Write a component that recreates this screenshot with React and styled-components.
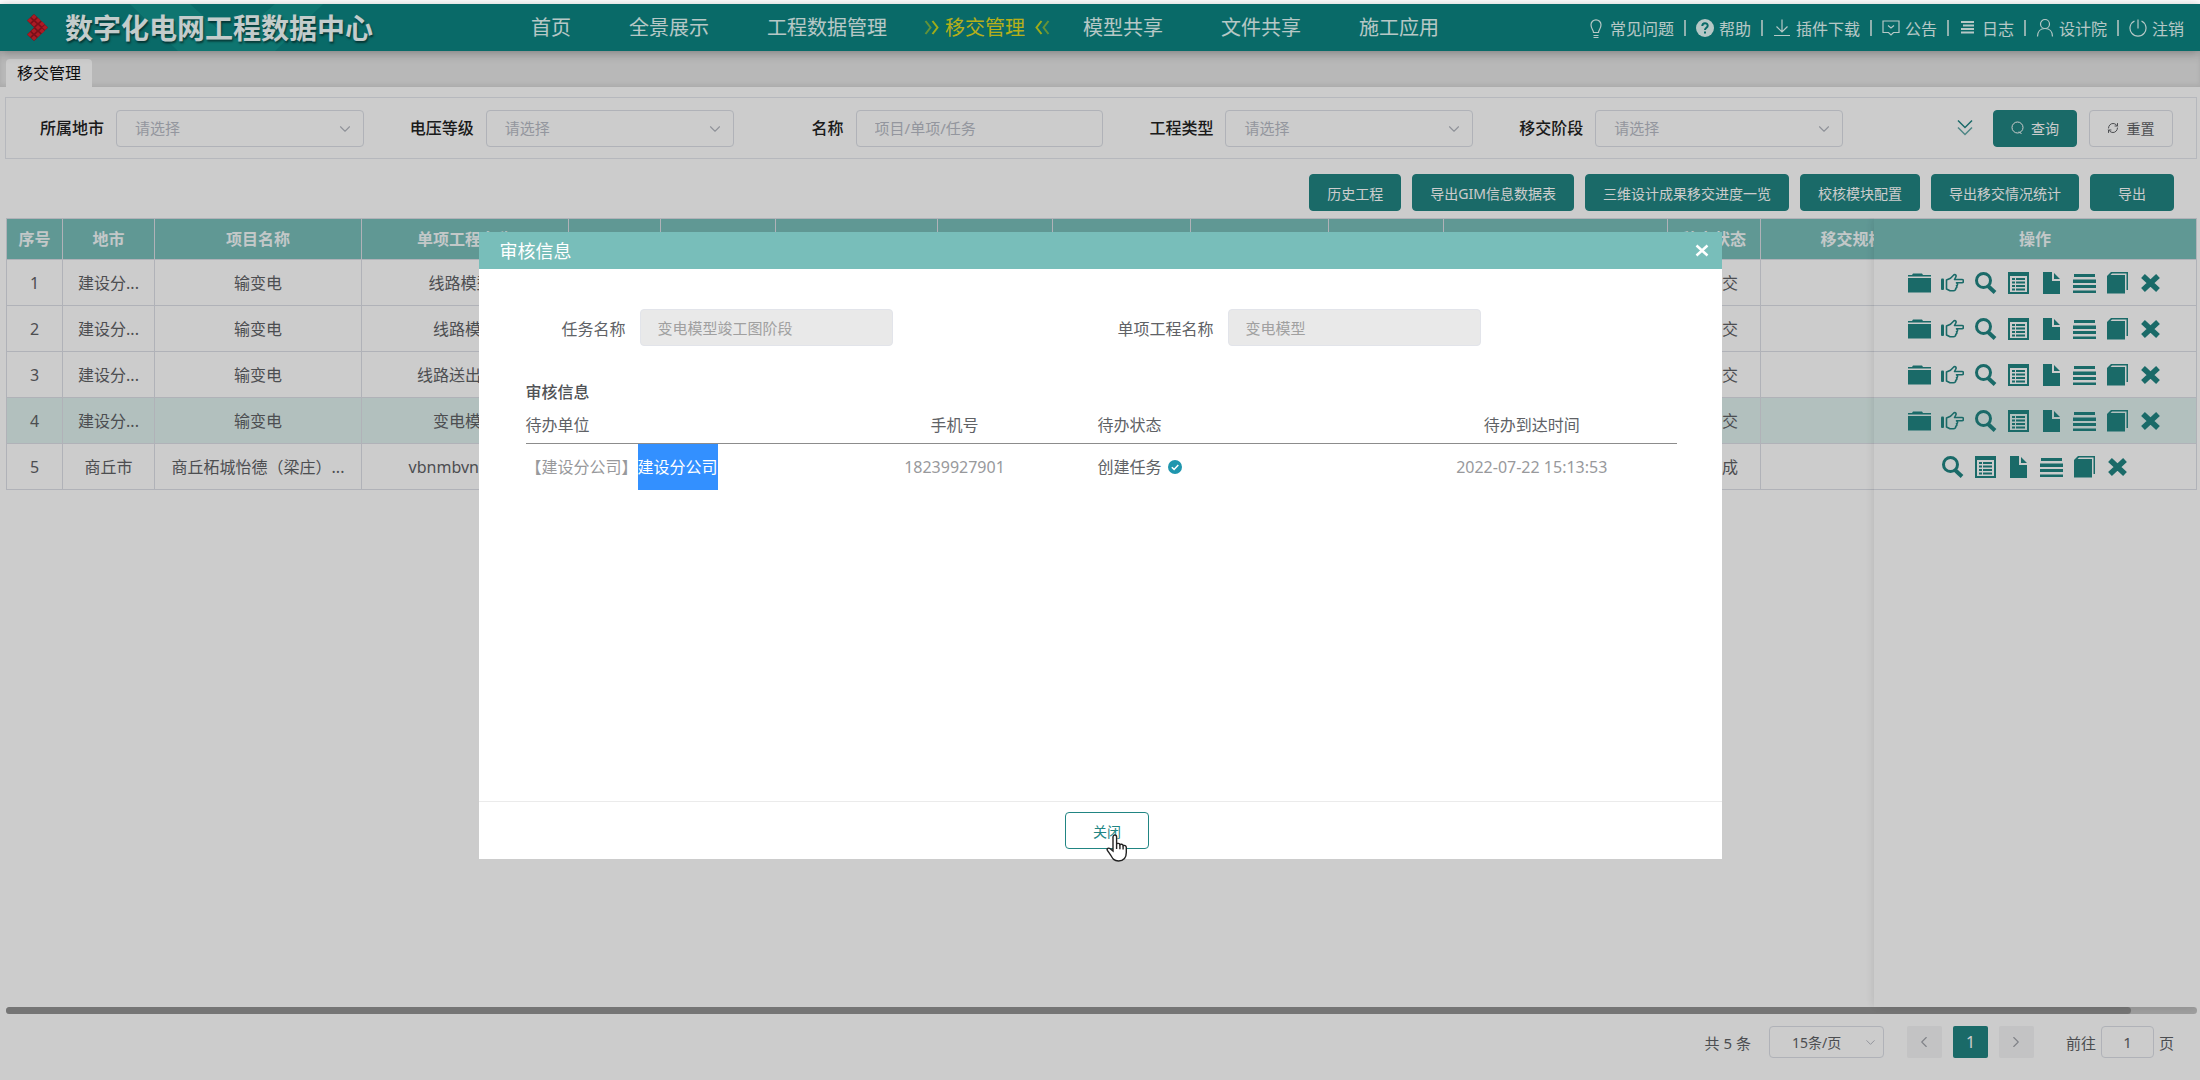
import styled, { createGlobalStyle } from "styled-components";
import { ChevronDown, ChevronLeft, ChevronRight, RefreshCw } from "lucide-react";

const navLinks = [
  { text: "首页" },
  { text: "全景展示" },
  { text: "工程数据管理" },
  { text: "移交管理", active: true },
  { text: "模型共享" },
  { text: "文件共享" },
  { text: "施工应用" },
];

const tools = [
  { text: "常见问题", icon: "bulb" },
  { text: "帮助", icon: "help" },
  { text: "插件下载", icon: "download" },
  { text: "公告", icon: "notice" },
  { text: "日志", icon: "log" },
  { text: "设计院", icon: "user" },
  { text: "注销", icon: "power" },
];

const filters = [
  { id: "city", label: "所属地市" },
  { id: "voltage", label: "电压等级" },
  { id: "name", label: "名称", placeholder: "项目/单项/任务" },
  { id: "type", label: "工程类型" },
  { id: "stage", label: "移交阶段" },
];

const exportsList = [
  "历史工程",
  "导出GIM信息数据表",
  "三维设计成果移交进度一览",
  "校核模块配置",
  "导出移交情况统计",
  "导出",
];

const columns = [
  { width: 57, title: "序号" },
  { width: 92, title: "地市" },
  { width: 207, title: "项目名称" },
  { width: 207, title: "单项工程名称" },
  { width: 92 },
  { width: 115 },
  { width: 162 },
  { width: 115 },
  { width: 138 },
  { width: 138 },
  { width: 115 },
  { width: 224 },
  { width: 93, title: "移交状态" },
  { width: 184, title: "移交规模" },
  { width: 323, title: "操作", fixed: true },
];

const rows = [
  { city: "建设分...", project: "输变电", name: "线路模型1", status: "未提交" },
  { city: "建设分...", project: "输变电", name: "线路模型", status: "未提交" },
  { city: "建设分...", project: "输变电", name: "线路送出工程", status: "未提交" },
  {
    city: "建设分...",
    project: "输变电",
    name: "变电模型",
    status: "未提交",
    current: true,
  },
  {
    city: "商丘市",
    project: "商丘柘城怡德（梁庄）...",
    name: "vbnmbvnmbvn",
    status: "已完成",
    done: true,
  },
];

const allActions = [
  "folder",
  "hand",
  "search",
  "list",
  "file",
  "lines",
  "book",
  "remove",
];

const toolIcons = {
  bulb: (
    <>
      <path d="M6.5 14.5C6.5 11.8 4 10.8 4 6.8a5 5 0 0 1 10 0c0 4-2.5 5-2.5 7.7z" />
      <path d="M6.5 17.5h5M6.5 19.5h5" />
    </>
  ),
  help: (
    <>
      <circle cx="9" cy="10" r="9" fill="currentColor" stroke="none" />
      <path
        d="M6.3 8c0-3.7 5.4-3.6 5.4-.3 0 2-2.7 2.1-2.7 4.3M9 13.6v2"
        stroke="#0c8582"
        strokeWidth="2"
      />
    </>
  ),
  download: <path d="M9 1.500v12M3.500 8.500L9 14l5.500-5.500M1 17.500h16" />,
  notice: (
    <>
      <path d="M1 3h16v11.500h-5.500L9 17l-2.500-2.500H1z" />
      <path d="M6 7.500l3 2.500 3-2.500" />
    </>
  ),
  log: (
    <path
      d="M2 4h13M4 7.500h11M2 11h13M2 14.500h13"
      strokeWidth="2.200"
    />
  ),
  user: (
    <>
      <circle cx="9" cy="6" r="4.500" />
      <path d="M1.500 18.500c0-5 3-8 7.500-8s7.500 3 7.500 8" />
    </>
  ),
  power: <path d="M5.500 3a8 8 0 1 0 7 0M9 1.500v9" />,
};

const actionIcons = {
  folder: (
    <path d="M0 4.500V3h4l1-1.500h9L15 3h8v1.500zM0 6h23v14.500H0z" />
  ),
  hand: (
    <>
      <rect x="0" y="6.500" width="3" height="11.500" rx="1" />
      <path
        d="M5.500 8l4-1.800L13 2.800c1.500-.8 2.600.8 1.800 2.200L13.500 7.500H21c2 0 2 3.200 0 3.200h-5.500c1.500.8 1.300 2.600 0 3 .8 1 .3 2.400-.8 2.600.3 1.500-.7 2.400-2.200 2.400H9L5.500 17z"
        fill="none"
        stroke="currentColor"
        strokeWidth="1.600"
        strokeLinejoin="round"
      />
    </>
  ),
  search: (
    <>
      <circle
        cx="9.500"
        cy="8.500"
        r="7"
        fill="none"
        stroke="currentColor"
        strokeWidth="3"
      />
      <path d="M14 14l7 6.500" stroke="currentColor" strokeWidth="4" />
    </>
  ),
  list: (
    <path
      fillRule="evenodd"
      d="M1 0h21v22H1zM3 4v16h17V4zM5 6h3v2H5zM9 6h9v2H9zM5 9.500h3v2H5zM9 9.500h9v2H9zM5 13h3v2H5zM9 13h9v2H9zM5 16.500h3v2H5zM9 16.500h9v2H9z"
    />
  ),
  file: <path d="M3 0h9v9h8v13H3zM14 1l6 6h-6z" />,
  lines: (
    <path d="M1 2h21v3H1zM0 7.500h23v3.500H0zM0 13h23v3H0zM0 18.500h23V21H0z" />
  ),
  book: (
    <path d="M5 0h17v18h-1.500V1.500H6L4.500 3H19v18.500H1V4z" />
  ),
  remove: (
    <path
      d="M4 4l15 14M19 4L4 18"
      stroke="currentColor"
      strokeWidth="5.500"
    />
  ),
};

const App = () => {
  return (
    <>
      <GlobalStyle />
      <Page>
        <Header />
        <Tabs>
          <Tab href="#transfer">移交管理</Tab>
        </Tabs>
        <Filters />
        <Toolbar>
          {exportsList.map((text) => {
            return <Button key={text}>{text}</Button>;
          })}
        </Toolbar>
        <ProjectTable />
        <Pagination />
        <Mask>
          <AuditDialog />
        </Mask>
      </Page>
    </>
  );
};

function Header() {
  return (
    <HeaderBar>
      <HeaderArt width="400" height="47" viewBox="0 0 400 47">
        <path d="M130 0h60l52 47h-64z" />
        <path d="M275 0h48l-48 47h-55z" />
      </HeaderArt>
      <Brand>
        <Logo />
        <h1>数字化电网工程数据中心</h1>
      </Brand>
      <Nav>
        {navLinks.map(({ text, active }) => {
          return (
            <NavLink key={text} href="#nav" $active={active}>
              {active && <Arrows />}
              {text}
              {active && <Arrows $right />}
            </NavLink>
          );
        })}
      </Nav>
      <Tools>
        {tools.map(({ text, icon }) => {
          return (
            <ToolLink key={text} href="#tool">
              <svg width="18" height="20" viewBox="0 0 18 20">
                {toolIcons[icon]}
              </svg>
              {text}
            </ToolLink>
          );
        })}
      </Tools>
    </HeaderBar>
  );
}

function Logo() {
  const dots = [
    [8, 4],
    [12, 7.5],
    [16, 11],
    [4, 7.5],
    [8, 11],
    [12, 14.5],
    [19, 14.5],
    [16, 18],
    [12, 21.5],
    [8, 25],
    [8, 18],
    [4, 21.5],
  ];
  return (
    <svg width="23" height="29" viewBox="0 0 23 29">
      <path d="M8 1l14 13.500L8 28l-7-6.500 7-7-7-7z" fill="#961420" />
      {dots.map(([x, y]) => {
        return (
          <path
            key={`${x}-${y}`}
            d={`M${x} ${y - 2.5}l2.700 2.500-2.700 2.500-2.700-2.500z`}
            fill="#d8222e"
          />
        );
      })}
    </svg>
  );
}

function Arrows({ $right }) {
  return (
    <ArrowIcon $right={$right} width="16" height="15" viewBox="0 0 16 15">
      <path d="M1.500 1l5 6.500-5 6.500" opacity="0.6" />
      <path d="M8.500 1l5 6.500-5 6.500" />
    </ArrowIcon>
  );
}

function Filters() {
  return (
    <FilterPanel>
      {filters.map(({ id, label, placeholder }) => {
        return (
          <Field key={id}>
            <label htmlFor={id}>{label}</label>
            <Control>
              {placeholder ? (
                <TextInput id={id} placeholder={placeholder} />
              ) : (
                <>
                  <Select id={id}>
                    <option>请选择</option>
                  </Select>
                  <ChevronDown size={18} strokeWidth={1.5} />
                </>
              )}
            </Control>
          </Field>
        );
      })}
      <FilterActions>
        <ExpandButton aria-label="展开">
          <svg width="16" height="18" viewBox="0 0 16 18">
            <path d="M1 1.500l7 7 7-7" />
            <path d="M1 8.500l7 7 7-7" opacity="0.7" />
          </svg>
        </ExpandButton>
        <Button>
          <svg width="13" height="14" viewBox="0 0 13 14">
            <circle cx="6.500" cy="6.500" r="5.500" />
            <path d="M8 10.500l2.500 2.500" />
          </svg>
          查询
        </Button>
        <Button $plain>
          <RefreshCw size={12} strokeWidth={2} />
          重置
        </Button>
      </FilterActions>
    </FilterPanel>
  );
}

function ProjectTable() {
  return (
    <TableArea>
      <TableScroll>
        <Table>
          <colgroup>
            {columns.map(({ width }, ind) => {
              return <col key={ind} width={width} />;
            })}
          </colgroup>
          <thead>
            <tr>
              {columns.map(({ title, fixed }, ind) => {
                return (
                  <HeadCell key={ind} $fixed={fixed}>
                    {title}
                  </HeadCell>
                );
              })}
            </tr>
          </thead>
          <tbody>
            {rows.map((row, ind) => {
              return <ProjectRow key={ind} index={ind + 1} {...row} />;
            })}
          </tbody>
        </Table>
      </TableScroll>
      <ScrollTrack>
        <ScrollThumb />
      </ScrollTrack>
    </TableArea>
  );
}

function ProjectRow({ index, city, project, name, status, current, done }) {
  const actions = done ? allActions.slice(2) : allActions;
  return (
    <Row $current={current}>
      <Cell>{index}</Cell>
      <Cell>{city}</Cell>
      <Cell>{project}</Cell>
      <Cell>{name}</Cell>
      {columns.slice(4, 12).map((col, ind) => {
        return <Cell key={ind} />;
      })}
      <Cell>{status}</Cell>
      <Cell />
      <Cell $fixed>
        <Actions>
          {actions.map((action) => {
            return (
              <IconButton key={action} aria-label={action}>
                <svg width="23" height="22" viewBox="0 0 23 22">
                  {actionIcons[action]}
                </svg>
              </IconButton>
            );
          })}
        </Actions>
      </Cell>
    </Row>
  );
}

function Pagination() {
  return (
    <Pager>
      <span>共 5 条</span>
      <PageSize>
        <select aria-label="每页条数">
          <option>15条/页</option>
        </select>
        <ChevronDown size={15} strokeWidth={1.5} />
      </PageSize>
      <PageButtons>
        <PageButton aria-label="上一页">
          <ChevronLeft size={18} strokeWidth={1.5} />
        </PageButton>
        <PageButton $active>1</PageButton>
        <PageButton aria-label="下一页">
          <ChevronRight size={18} strokeWidth={1.5} />
        </PageButton>
      </PageButtons>
      <Jump>
        前往
        <input defaultValue="1" />页
      </Jump>
    </Pager>
  );
}

function AuditDialog() {
  return (
    <Dialog role="dialog" aria-labelledby="dialog-title">
      <DialogHeader>
        <h2 id="dialog-title">审核信息</h2>
        <CloseButton aria-label="关闭">
          <svg width="14" height="13" viewBox="0 0 14 13">
            <path d="M1.500 1.500l11 10M12.500 1.500l-11 10" />
          </svg>
        </CloseButton>
      </DialogHeader>
      <DialogBody>
        <DialogForm>
          <DialogField>
            <label htmlFor="task">任务名称</label>
            <input id="task" defaultValue="变电模型竣工图阶段" disabled />
          </DialogField>
          <DialogField>
            <label htmlFor="single">单项工程名称</label>
            <input id="single" defaultValue="变电模型" disabled />
          </DialogField>
        </DialogForm>
        <h3>审核信息</h3>
        <AuditTable>
          <colgroup>
            <col width="286" />
            <col width="286" />
            <col />
            <col />
          </colgroup>
          <thead>
            <tr>
              <AuditHead $align="left">待办单位</AuditHead>
              <AuditHead>手机号</AuditHead>
              <AuditHead $align="left">待办状态</AuditHead>
              <AuditHead>待办到达时间</AuditHead>
            </tr>
          </thead>
          <tbody>
            <tr>
              <AuditCell $align="left">
                【建设分公司】<Selected>建设分公司</Selected>
              </AuditCell>
              <AuditCell>18239927901</AuditCell>
              <AuditCell $align="left" $dark>
                <Status>
                  创建任务
                  <svg width="14" height="14" viewBox="0 0 14 14">
                    <circle cx="7" cy="7" r="7" fill="#1f96ae" />
                    <path
                      d="M3.800 7.200l2.300 2.200 4.200-4.400"
                      fill="none"
                      stroke="#fff"
                      strokeWidth="1.500"
                    />
                  </svg>
                </Status>
              </AuditCell>
              <AuditCell>2022-07-22 15:13:53</AuditCell>
            </tr>
          </tbody>
        </AuditTable>
      </DialogBody>
      <DialogFooter>
        <OutlineButton>
          关闭
          <Pointer width="22" height="28" viewBox="0 0 22 28">
            <path d="M7 17V3c0-2.700 3.600-2.700 3.600 0v7c.5-1 3-.9 3.300.6 1-.8 3-.4 3.200 1 1.300-.5 3.200 0 3.200 2v5c0 5-2.300 8.400-7.800 8.400-4.600 0-6-2.600-7.500-5.300l-3.600-5.300c-1-2 1.200-3 2.800-1.600z" />
            <path d="M10.600 10v5M13.900 10.700v4.500M17.100 11.700v3.800" />
          </Pointer>
        </OutlineButton>
      </DialogFooter>
    </Dialog>
  );
}

const GlobalStyle = createGlobalStyle`
  * {
    box-sizing: border-box;
  }
  body {
    margin: 0;
    padding-top: 4px;
    background: #fff;
    color: #606266;
  }
  body, button, input, select {
    font-family: "Noto Sans", "Noto Sans CJK SC", sans-serif;
    font-size: 16px;
  }
  h1, h2, h3 {
    margin: 0;
  }
  a {
    text-decoration: none;
  }
  button {
    cursor: pointer;
  }
`;

const Page = styled.main`
  position: relative;
  display: flex;
  flex-direction: column;
  min-height: calc(100vh - 4px);
`;

const HeaderBar = styled.header`
  position: relative;
  display: flex;
  align-items: center;
  height: 47px;
  background: #0c8582;
  color: #e4faf8;
  box-shadow: 0 2px 10px rgba(0, 0, 0, 0.3);
  z-index: 1;
`;

const HeaderArt = styled.svg`
  position: absolute;
  left: 0;
  top: 0;
  fill: #22b5a4;
  opacity: 0.3;
`;

const Brand = styled.div`
  position: relative;
  display: flex;
  align-items: center;
  gap: 16px;
  flex: 0 0 502px;
  padding-left: 26px;
  h1 {
    font-size: 28px;
    line-height: 40px;
    color: #f4fffe;
    text-shadow: 1px 2px 2px rgba(0, 0, 0, 0.5);
  }
`;

const Nav = styled.nav`
  display: flex;
  flex: 1;
`;

const NavLink = styled.a`
  position: relative;
  padding: 0 29px;
  font-size: 20px;
  line-height: 48px;
  white-space: nowrap;
  color: ${({ $active }) => ($active ? "#e3dc20" : "inherit")};
`;

const ArrowIcon = styled.svg`
  position: absolute;
  top: 16px;
  ${({ $right }) =>
    $right ? "right: 4px; transform: scaleX(-1);" : "left: 8px;"}
  fill: none;
  stroke: #c8d820;
  stroke-width: 2;
`;

const Tools = styled.div`
  display: flex;
  padding-right: 6px;
`;

const ToolLink = styled.a`
  display: flex;
  align-items: center;
  gap: 5px;
  height: 16px;
  padding: 0 10px;
  white-space: nowrap;
  color: inherit;
  & + & {
    border-left: 2px solid #b5dcda;
  }
  svg {
    fill: none;
    stroke: currentColor;
    stroke-width: 1.2;
  }
`;

const Tabs = styled.nav`
  display: flex;
  align-items: flex-end;
  height: 36px;
  padding: 0 6px;
  background: #e6e6e6;
  box-shadow: inset 0 -2px 4px rgba(0, 0, 0, 0.08);
`;

const Tab = styled.a`
  height: 28px;
  padding: 0 11px;
  border-radius: 4px 4px 0 0;
  background: #fff;
  color: #111;
  line-height: 28px;
`;

const FilterPanel = styled.section`
  display: flex;
  align-items: center;
  gap: 35px;
  height: 62px;
  margin: 10px 3px 0 5px;
  padding: 0 23px;
  border: 1px solid #e4e7ed;
`;

const Field = styled.div`
  display: flex;
  align-items: center;
  flex: 1;
  gap: 12px;
  label {
    flex: 0 0 75px;
    color: #222;
    font-weight: 500;
    line-height: 24px;
    text-align: right;
  }
`;

const Control = styled.div`
  position: relative;
  flex: 1;
  svg {
    position: absolute;
    top: 10px;
    right: 10px;
    color: #b4b8c0;
    pointer-events: none;
  }
`;

const TextInput = styled.input`
  display: block;
  width: 100%;
  height: 37px;
  padding: 0 18px;
  border: 1px solid #dcdfe6;
  border-radius: 4px;
  background: #fff;
  font-size: 15px;
  color: #b8bcc6;
  &::placeholder {
    color: #b8bcc6;
  }
`;

const Select = styled(TextInput).attrs({ as: "select" })`
  appearance: none;
`;

const FilterActions = styled.div`
  display: flex;
  align-items: center;
  justify-content: flex-end;
  gap: 12px;
  flex: 0 0 295px;
`;

const ExpandButton = styled.button`
  display: flex;
  margin-right: 8px;
  padding: 0;
  border: 0;
  background: none;
  svg {
    fill: none;
    stroke: #218583;
    stroke-width: 1.5;
  }
`;

const Button = styled.button`
  display: flex;
  align-items: center;
  justify-content: center;
  gap: 7px;
  min-width: 84px;
  height: 37px;
  padding: 0 17px;
  border: 1px solid ${({ $plain }) => ($plain ? "#dcdfe6" : "#218583")};
  border-radius: 4px;
  background: ${({ $plain }) => ($plain ? "#fff" : "#218583")};
  color: ${({ $plain }) => ($plain ? "#606266" : "#fff")};
  font-size: 14px;
  white-space: nowrap;
  svg {
    fill: none;
    stroke: currentColor;
  }
`;

const Toolbar = styled.div`
  display: flex;
  justify-content: flex-end;
  gap: 11px;
  padding: 15px 26px 7px;
`;

const TableArea = styled.section`
  position: relative;
  display: flex;
  flex-direction: column;
  flex: 1;
  margin: 0 3px 0 6px;
  overflow: hidden;
  /* shade of the fixed column runs down to the scrollbar */
  &::after {
    content: "";
    position: absolute;
    top: 0;
    right: 0;
    bottom: 7px;
    width: 323px;
    box-shadow: 0 0 10px rgba(0, 0, 0, 0.12);
    pointer-events: none;
  }
`;

const TableScroll = styled.div`
  flex: 1;
  overflow: hidden;
`;

const Table = styled.table`
  width: 2262px;
  table-layout: fixed;
  border-collapse: separate;
  border-spacing: 0;
`;

const HeadCell = styled.th`
  position: ${({ $fixed }) => ($fixed ? "sticky" : "static")};
  right: 0;
  height: 42px;
  padding: 0;
  border: 1px solid #dcdfe6;
  border-width: 1px 1px 1px 0;
  background: #78beba;
  color: #f4fafa;
  font-weight: 700;
  line-height: 24px;
  white-space: nowrap;
  &:first-child {
    border-left-width: 1px;
  }
`;

const Row = styled.tr`
  background: ${({ $current }) => ($current ? "#dff1ee" : "#fff")};
`;

const Cell = styled.td`
  position: ${({ $fixed }) => ($fixed ? "sticky" : "static")};
  right: 0;
  height: 46px;
  padding: 0;
  border: 1px solid #dcdfe6;
  border-width: 0 1px 1px 0;
  background: inherit;
  line-height: 24px;
  text-align: center;
  white-space: nowrap;
  &:first-child {
    border-left-width: 1px;
  }
`;

const Actions = styled.div`
  display: flex;
  justify-content: center;
  gap: 10px;
`;

const IconButton = styled.button`
  display: flex;
  padding: 0;
  border: 0;
  background: none;
  color: #218583;
  svg {
    fill: currentColor;
  }
`;

const ScrollTrack = styled.div`
  height: 7px;
  border-radius: 4px;
  background: #c6c6c6;
`;

const ScrollThumb = styled.div`
  width: 97%;
  height: 7px;
  border-radius: 4px;
  background: #939393;
`;

const Pager = styled.footer`
  display: flex;
  align-items: center;
  justify-content: flex-end;
  height: 66px;
  padding: 0 26px 10px 0;
  font-size: 15px;
`;

const PageSize = styled.div`
  position: relative;
  margin: 0 23px 0 18px;
  select {
    display: block;
    width: 115px;
    height: 32px;
    padding: 0 22px;
    border: 1px solid #dcdfe6;
    border-radius: 4px;
    background: #fff;
    color: #606266;
    font-size: 14px;
    appearance: none;
  }
  svg {
    position: absolute;
    top: 9px;
    right: 6px;
    color: #b4b8c0;
    pointer-events: none;
  }
`;

const PageButtons = styled.div`
  display: flex;
  gap: 11px;
`;

const PageButton = styled.button`
  display: flex;
  align-items: center;
  justify-content: center;
  width: 35px;
  height: 32px;
  padding: 0;
  border: 0;
  border-radius: 2px;
  background: ${({ $active }) => ($active ? "#218583" : "#f4f4f5")};
  color: ${({ $active }) => ($active ? "#fff" : "#a0a3aa")};
`;

const Jump = styled.label`
  display: flex;
  align-items: center;
  gap: 5px;
  margin-left: 32px;
  input {
    width: 53px;
    height: 32px;
    border: 1px solid #dcdfe6;
    border-radius: 4px;
    background: #fff;
    color: #606266;
    font-size: 15px;
    text-align: center;
  }
`;

const Mask = styled.div`
  position: absolute;
  inset: 0;
  display: flex;
  align-items: flex-start;
  justify-content: center;
  padding-top: 228px;
  background: rgba(0, 0, 0, 0.2);
  z-index: 2;
`;

const Dialog = styled.section`
  width: 56.5%;
  background: #fff;
`;

const DialogHeader = styled.header`
  display: flex;
  align-items: center;
  justify-content: space-between;
  height: 37px;
  padding: 0 13px 0 21px;
  background: #78beba;
  color: #fff;
  h2 {
    font-size: 18px;
    font-weight: 400;
    line-height: 36px;
  }
`;

const CloseButton = styled.button`
  display: flex;
  padding: 0;
  border: 0;
  background: none;
  svg {
    fill: none;
    stroke: #fff;
    stroke-width: 2.5;
  }
`;

const DialogBody = styled.div`
  min-height: 532px;
  padding: 40px 45px 0 47px;
  h3 {
    margin-top: 33px;
    color: #505256;
    font-size: 16px;
    font-weight: 500;
    line-height: 26px;
  }
`;

const DialogForm = styled.div`
  display: flex;
  justify-content: space-between;
  padding: 0 196px 0 4px;
`;

const DialogField = styled.div`
  display: flex;
  align-items: center;
  gap: 14px;
  label {
    width: 96px;
    text-align: right;
  }
  input {
    width: 253px;
    height: 37px;
    padding: 0 17px;
    border: 1px solid #e2e4ea;
    border-radius: 4px;
    background: #e9e9e9;
    color: #a0a0a0;
    font-size: 15px;
  }
`;

const AuditTable = styled.table`
  width: 100%;
  table-layout: fixed;
  border-spacing: 0;
`;

const AuditHead = styled.th`
  height: 39px;
  padding: 0;
  border-bottom: 1px solid #8c8c8c;
  font-weight: 400;
  text-align: ${({ $align }) => $align || "center"};
`;

const AuditCell = styled.td`
  height: 46px;
  padding: 0;
  color: ${({ $dark }) => ($dark ? "#606266" : "#98999c")};
  line-height: 46px;
  text-align: ${({ $align }) => $align || "center"};
  white-space: nowrap;
`;

const Selected = styled.mark`
  display: inline-block;
  background: #3390ff;
  color: #fff;
`;

const Status = styled.span`
  display: flex;
  align-items: center;
  gap: 6px;
`;

const DialogFooter = styled.footer`
  display: flex;
  justify-content: center;
  padding: 10px 0 10px 14px;
  border-top: 1px solid #ebebeb;
`;

const OutlineButton = styled.button`
  position: relative;
  width: 84px;
  height: 37px;
  border: 1px solid #218583;
  border-radius: 4px;
  background: #fff;
  color: #218583;
  font-size: 14px;
`;

const Pointer = styled.svg`
  position: absolute;
  top: 21px;
  left: 40px;
  fill: #fff;
  stroke: #222;
  stroke-width: 1.4;
`;

export default App;
